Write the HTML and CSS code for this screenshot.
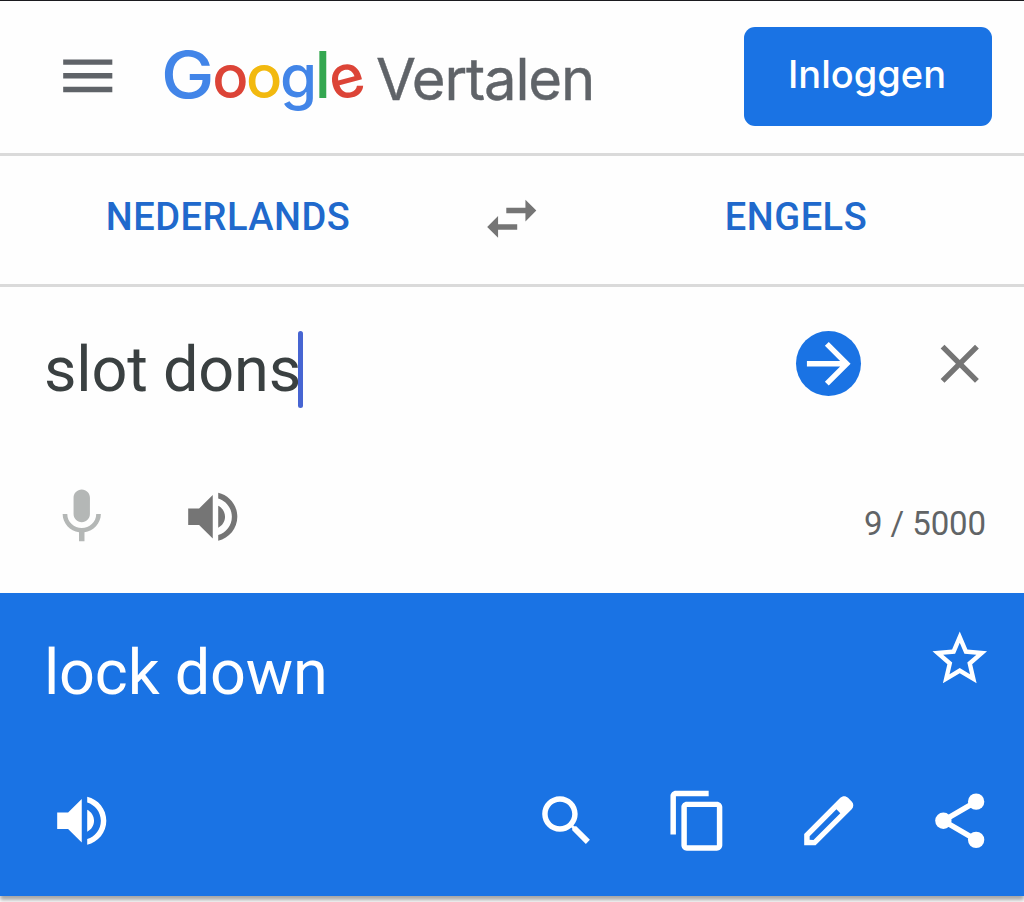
FILE: index.html
```html
<!DOCTYPE html>
<html lang="nl">
<head>
  <meta charset="UTF-8">
  <meta name="viewport" content="width=device-width, initial-scale=1.0">
  <title>Google Vertalen</title>
  <link rel="stylesheet" href="styles.css">
</head>
<body>
  <header class="header">
    <svg class="icon menu" viewBox="0 0 24 24"><path d="M3 18h18v-2H3v2zm0-5h18v-2H3v2zm0-7v2h18V6H3z"/></svg>
    <h1 class="logo">
      <span class="google"><span class="blue capital">G</span><span class="red">o</span><span class="yellow">o</span><span class="blue">g</span><span class="green tall">l</span><span class="red tilt">e</span></span>
      <span class="product">Vertalen</span>
    </h1>
    <button class="login">Inloggen</button>
  </header>

  <nav class="languages">
    <span class="language from">Nederlands</span>
    <svg class="icon swap" viewBox="0 0 24 24"><path d="M6.99 11L3 15l3.99 4v-3H14v-2H6.99v-3zM21 9l-3.99-4v3H10v2h7.01v3L21 9z"/></svg>
    <span class="language to">Engels</span>
  </nav>

  <main>
    <section class="source">
      <div class="row">
        <div class="text source-text">slot dons<span class="caret"></span></div>
        <div class="icons">
          <span class="go"><svg class="icon" viewBox="0 0 24 24"><path d="M12 4l-1.41 1.41L16.17 11H4v2h12.17l-5.58 5.59L12 20l8-8z"/></svg></span>
          <svg class="icon" viewBox="0 0 24 24"><path d="M19 6.41L17.59 5 12 10.59 6.41 5 5 6.41 10.59 12 5 17.59 6.41 19 12 13.41 17.59 19 19 17.59 13.41 12z"/></svg>
        </div>
      </div>
      <div class="row">
        <div class="icons">
          <svg class="icon mic" viewBox="0 0 24 24"><path d="M12 14c1.66 0 2.99-1.34 2.99-3L15 5c0-1.66-1.34-3-3-3S9 3.34 9 5v6c0 1.66 1.34 3 3 3zm5.3-3c0 3-2.54 5.1-5.3 5.1S6.7 14 6.7 11H5c0 3.41 2.72 6.23 6 6.72V21h2v-3.28c3.28-.48 6-3.3 6-6.72h-1.7z"/></svg>
          <svg class="icon" viewBox="0 0 24 24"><path d="M3 9v6h4l5 5V4L7 9H3zm13.5 3c0-1.77-1.02-3.29-2.5-4.03v8.05c1.48-.73 2.5-2.25 2.5-4.02zM14 3.23v2.06c2.89.86 5 3.54 5 6.71s-2.11 5.85-5 6.71v2.06c4.01-.91 7-4.49 7-8.77s-2.99-7.86-7-8.77z"/></svg>
        </div>
        <span class="counter">9 / 5000</span>
      </div>
    </section>

    <section class="result">
      <div class="row">
        <div class="text result-text">lock down</div>
        <svg class="icon" viewBox="0 0 24 24"><path d="M22 9.24l-7.19-.62L12 2 9.19 8.63 2 9.24l5.46 4.73L5.82 21 12 17.27 18.18 21l-1.63-7.03L22 9.24zM12 15.4l-3.76 2.27 1-4.28-3.32-2.88 4.38-.38L12 6.1l1.71 4.04 4.38.38-3.32 2.88 1 4.28L12 15.4z"/></svg>
      </div>
      <div class="row">
        <svg class="icon" viewBox="0 0 24 24"><path d="M3 9v6h4l5 5V4L7 9H3zm13.5 3c0-1.77-1.02-3.29-2.5-4.03v8.05c1.48-.73 2.5-2.25 2.5-4.02zM14 3.23v2.06c2.89.86 5 3.54 5 6.71s-2.11 5.85-5 6.71v2.06c4.01-.91 7-4.49 7-8.77s-2.99-7.86-7-8.77z"/></svg>
        <div class="icons">
          <svg class="icon" viewBox="0 0 24 24"><path d="M15.5 14h-.79l-.28-.27C15.41 12.59 16 11.11 16 9.5 16 5.91 13.09 3 9.5 3S3 5.91 3 9.5 5.91 16 9.5 16c1.61 0 3.09-.59 4.23-1.57l.27.28v.79l5 4.99L20.49 19l-4.99-5zm-6 0C7.01 14 5 11.99 5 9.5S7.01 5 9.5 5 14 7.01 14 9.5 11.99 14 9.5 14z"/></svg>
          <svg class="icon" viewBox="0 0 24 24"><path d="M16 1H4c-1.1 0-2 .9-2 2v14h2V3h12V1zm3 4H8c-1.1 0-2 .9-2 2v14c0 1.1.9 2 2 2h11c1.1 0 2-.9 2-2V7c0-1.1-.9-2-2-2zm0 16H8V7h11v14z"/></svg>
          <svg class="icon" viewBox="0 0 24 24"><path d="M20.41 4.94l-1.35-1.35c-.78-.78-2.05-.78-2.83 0L3 16.82V21h4.18L20.41 7.77c.79-.78.79-2.05 0-2.83zM6.41 19.06L5 19v-1.36l9.82-9.82 1.41 1.41-9.82 9.83z"/></svg>
          <svg class="icon" viewBox="0 0 24 24"><path d="M18 5L6 12l12 7" fill="none" stroke="currentColor" stroke-width="2"/><circle cx="18" cy="5" r="3"/><circle cx="6" cy="12" r="3"/><circle cx="18" cy="19" r="3"/></svg>
        </div>
      </div>
    </section>
  </main>
</body>
</html>
```
FILE: styles.css
```css
* {
  box-sizing: border-box;
}

body {
  font-family: Roboto, sans-serif;
  margin: 0;
  height: 902px;
  overflow: hidden;
  background-color: #fefefe;
  color: #757575;
  border-top: 1px solid #1b1b1f;
}

.icon {
  display: block;
  flex: none;
  width: 65.5px;
  height: 65.5px;
  fill: currentColor;
}

.header {
  display: flex;
  align-items: center;
  height: 155px;
  padding: 0 32px 2px 54.5px;
  border-bottom: 3px solid #dadada;
}

.menu {
  color: #5f6368;
}

.logo {
  display: flex;
  align-items: center;
  gap: 14px;
  margin: 0 0 0 41px;
  font-family: Inter, sans-serif;
  font-weight: 400;
  line-height: 80px;
  white-space: nowrap;
}

.google {
  width: 201px;
  font-size: 60px;
  font-weight: 500;
  letter-spacing: -2.4px;
}

.capital,
.tall {
  font-size: 65px;
  line-height: 1;
}

.capital {
  display: inline-block;
  margin-right: 5px;
  transform: scaleX(1.1);
  transform-origin: left;
}

.tall {
  font-size: 64px;
}

.tilt {
  display: inline-block;
  line-height: 1;
  transform: rotate(-15deg);
}

.blue { color: #4285e8; }
.red { color: #dc4437; }
.yellow { color: #f2b90f; }
.green { color: #34a750; }

.product {
  padding-top: 5px;
  font-size: 58px;
  letter-spacing: -1.2px;
  color: #5f6368;
  -webkit-text-stroke: 0.4px currentColor;
}

.login {
  width: 248px;
  height: 99px;
  margin-left: auto;
  padding: 0 2px 4px 0;
  border: none;
  border-radius: 11px;
  background-color: #1a73e4;
  color: #fff;
  font-family: Inter, sans-serif;
  font-size: 38px;
  font-weight: 500;
}

.languages {
  display: grid;
  grid-template-columns: 456px 112px 456px;
  align-items: center;
  justify-items: center;
  height: 131px;
  padding-bottom: 2px;
  border-bottom: 3px solid #dadada;
}

.language {
  padding-bottom: 4px;
  color: #2069cc;
  font-size: 38px;
  font-weight: 500;
  line-height: 44px;
  letter-spacing: 0.5px;
  text-transform: uppercase;
}

.row {
  display: flex;
  justify-content: space-between;
}

.icons {
  display: flex;
  align-items: flex-start;
  gap: 65.5px;
}

.text {
  font-size: 63px;
  line-height: 78px;
  letter-spacing: -0.2px;
}

.source {
  display: flex;
  flex-direction: column;
  gap: 75px;
  height: 306px;
  padding: 43.5px 32px 0 44px;
}

.source-text {
  display: flex;
  color: #3a4041;
}

.caret {
  width: 5px;
  height: 77px;
  margin-left: -3px;
  border-radius: 3px;
  background-color: #4765d2;
}

.go {
  border-radius: 50%;
  background-color: #1a73e4;
  color: #fff;
}

.mic {
  margin-left: 5px;
  color: #b4b7b6;
}

.counter {
  padding: 20px 6px 0 0;
  color: #616466;
  font-size: 33px;
  line-height: 40px;
  letter-spacing: -0.1px;
}

.result {
  display: flex;
  flex-direction: column;
  justify-content: space-between;
  height: 303px;
  padding: 33px 32px 43px 44px;
  background-color: #1a73e4;
  color: #fff;
  box-shadow: 0 4px 4px rgba(0, 0, 0, 0.35);
}

.result-text {
  padding-top: 8px;
}

.result .row:last-child {
  padding-left: 5px;
}
```
